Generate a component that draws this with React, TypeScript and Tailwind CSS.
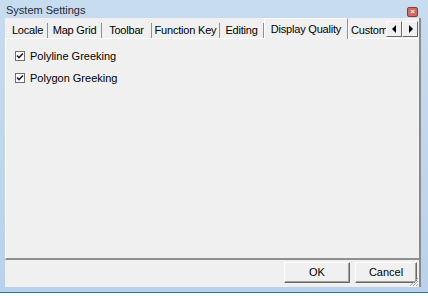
import React from "react";

const tabs = [
  { label: "Locale", w: "w-[40px]" },
  { label: "Map Grid", w: "w-[54px]" },
  { label: "Toolbar", w: "w-[50px]" },
  { label: "Function Key", w: "w-[68px]" },
  { label: "Editing", w: "w-[44px]" },
];

function Check({ label }: { label: string }) {
  return (
    <div className="flex h-[22px] items-center">
      <div className="ml-[9px] flex h-[10px] w-[10px] items-center justify-center border border-[#6d6d6d] bg-white">
        <svg width="8" height="8" viewBox="0 0 8 8">
          <path d="M1 3.5 L3 5.5 L7 1.5" stroke="#222" strokeWidth="1.6" fill="none" />
        </svg>
      </div>
      <span className="ml-[5px] text-[11px] text-black">{label}</span>
    </div>
  );
}

function Btn({ label, w }: { label: string; w: string }) {
  return (
    <div
      className={`flex h-[21px] ${w} items-center justify-center border border-t-white border-l-white border-r-[#696969] border-b-[#696969] bg-[#f0f0f0] text-[11px] text-black shadow-[inset_-1px_-1px_0_#a0a0a0]`}
    >
      {label}
    </div>
  );
}

export default function App() {
  return (
    <div className="h-[296px] w-[428px] overflow-hidden bg-white" style={{ fontFamily: '"Liberation Sans", Arial, sans-serif' }}>
      <div className="flex h-[293px] w-[428px] flex-col border-b border-[#2d7898] bg-gradient-to-b from-[#c8dcf0] to-[#b9d1ea]">
        {/* title bar */}
        <div className="flex h-[18px] items-center justify-between pl-[6px] pr-[10px]">
          <span className="pt-[3px] text-[11px] text-[#1e2a3a]">System Settings</span>
          <div className="mt-[5px] flex h-[10px] w-[11px] items-center justify-center rounded-[2px] border border-[#8a3a3a] bg-[#d06a62] text-[8px] leading-none font-bold text-white">
            ×
          </div>
        </div>
        {/* client */}
        <div className="ml-[5px] mr-[7px] flex h-[269px] flex-col border-r-2 border-r-[#8a8a8a] bg-[#f0f0f0]">
          {/* tab strip */}
          <div className="flex h-[20px] items-end">
            <div className="w-[3px]" />
            {tabs.map((t) => (
              <div
                key={t.label}
                className={`flex h-[15px] ${t.w} items-center justify-center whitespace-nowrap border-r border-r-[#8f8f8f] text-[11px] tracking-[-0.2px] text-black`}
              >
                {t.label}
              </div>
            ))}
            <div className="relative z-10 -mb-px flex h-[21px] w-[84px] items-start justify-center border-t border-r border-l border-t-white border-r-[#8f8f8f] border-l-white bg-[#f0f0f0] pt-[2px] text-[11px] tracking-[-0.2px] text-black">
              Display Quality
            </div>
            <div className="flex h-[15px] w-[38px] items-center overflow-hidden whitespace-nowrap border-l border-l-white pl-[2px] text-[11px] tracking-[-0.2px] text-black">
              Custom
            </div>
            <div className="mb-[1px] flex h-[16px]">
              <div className="flex w-[16px] items-center justify-center border border-t-white border-r-[#696969] border-b-[#696969] border-l-white bg-[#f0f0f0]">
                <svg width="5" height="8" viewBox="0 0 5 8"><path d="M4 0 L0 4 L4 8 Z" fill="#000" /></svg>
              </div>
              <div className="flex w-[16px] items-center justify-center border border-t-white border-r-[#696969] border-b-[#696969] border-l-white bg-[#f0f0f0]">
                <svg width="5" height="8" viewBox="0 0 5 8"><path d="M1 0 L5 4 L1 8 Z" fill="#000" /></svg>
              </div>
            </div>
          </div>
          {/* panel */}
          <div className="flex h-[222px] flex-col border-t border-b-2 border-l border-t-white border-b-[#8f8f8f] border-l-white pt-[6px]">
            <Check label="Polyline Greeking" />
            <Check label="Polygon Greeking" />
          </div>
          {/* buttons */}
          <div className="relative flex flex-1 items-start justify-end gap-[5px] pt-[2px] pr-[2px]">
            <Btn label="OK" w="w-[66px]" />
            <Btn label="Cancel" w="w-[62px]" />
            <svg className="absolute right-0 bottom-0" width="11" height="11" viewBox="0 0 11 11">
              <path d="M10 2 L2 10 M10 5 L5 10 M10 8 L8 10" stroke="#a0a0a0" strokeWidth="1" />
              <path d="M11 3 L3 11 M11 6 L6 11 M11 9 L9 11" stroke="#fff" strokeWidth="1" />
            </svg>
          </div>
        </div>
      </div>
    </div>
  );
}
